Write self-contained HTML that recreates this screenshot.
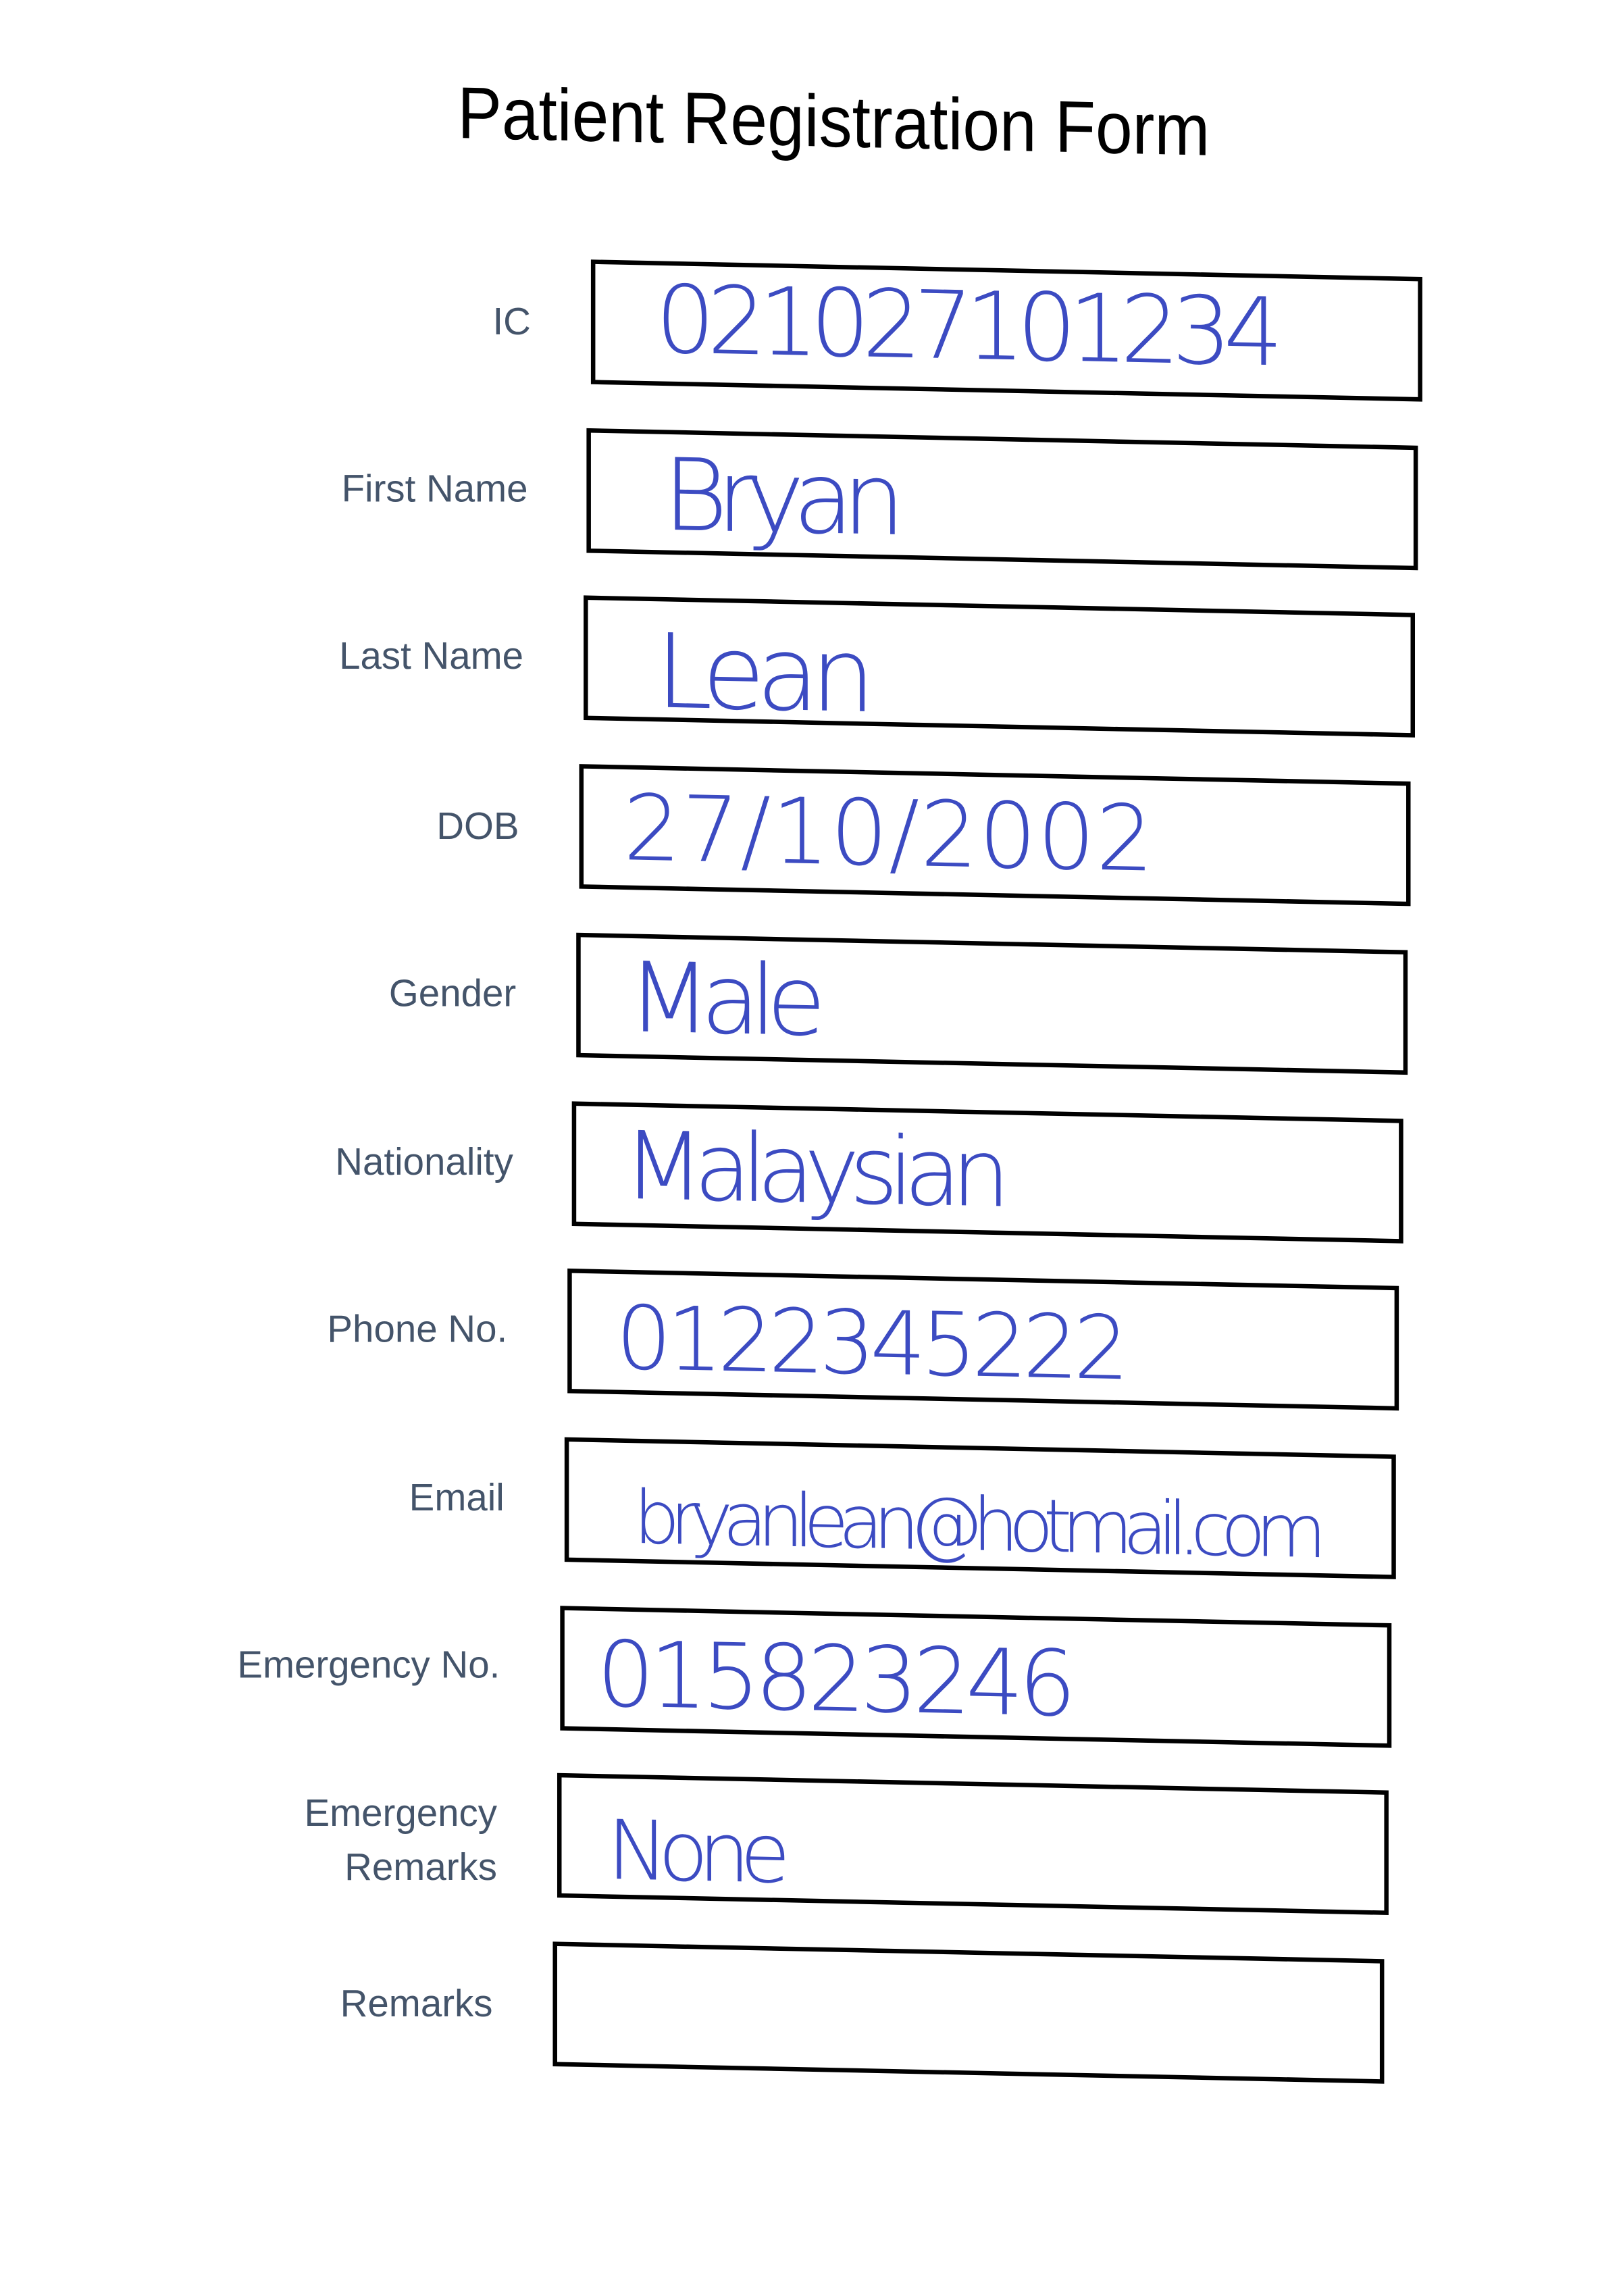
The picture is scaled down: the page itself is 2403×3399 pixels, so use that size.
<!DOCTYPE html>
<html><head><meta charset="utf-8"><style>
html,body{margin:0;padding:0;background:#fff;overflow:hidden}
#w{position:absolute;left:0;top:0;width:1100px;height:1556px;transform:scale(2.171);transform-origin:0 0}
.b{position:absolute;width:561px;height:79px;border:3.5px solid #000;transform:skewY(1.2deg);transform-origin:0 0}
.l{position:absolute;font-family:"Liberation Sans",sans-serif;font-size:26px;line-height:26px;color:#44546a;text-align:right;white-space:nowrap}
.h{position:absolute;font-family:"DejaVu Sans","Liberation Sans",sans-serif;font-weight:200;color:#3c4bc2;line-height:1;white-space:nowrap;transform:skewY(1.2deg);transform-origin:0 0}
</style></head><body><div id="w">
<div style="position:absolute;left:312px;top:52px;font-family:'Liberation Sans',sans-serif;font-size:50px;line-height:1;color:#000;white-space:nowrap;transform:scaleX(0.905) skewY(1.2deg);transform-origin:0 0">Patient Registration Form</div>

<div class="b" style="left:403px;top:177px"></div>
<div class="b" style="left:400px;top:292px"></div>
<div class="b" style="left:398px;top:406px"></div>
<div class="b" style="left:395px;top:521px"></div>
<div class="b" style="left:393px;top:636px"></div>
<div class="b" style="left:390px;top:751px"></div>
<div class="b" style="left:387px;top:865px"></div>
<div class="b" style="left:385px;top:980px"></div>
<div class="b" style="left:382px;top:1095px"></div>
<div class="b" style="left:380px;top:1209px"></div>
<div class="b" style="left:377px;top:1324px"></div>

<div class="l" style="right:738px;top:206px">IC</div>
<div class="l" style="right:740px;top:320px">First Name</div>
<div class="l" style="right:743px;top:434px">Last Name</div>
<div class="l" style="right:746px;top:550px">DOB</div>
<div class="l" style="right:748px;top:664px">Gender</div>
<div class="l" style="right:750px;top:779px">Nationality</div>
<div class="l" style="right:754px;top:893px">Phone No.</div>
<div class="l" style="right:756px;top:1008px">Email</div>
<div class="l" style="right:759px;top:1122px">Emergency No.</div>
<div class="l" style="right:761px;top:1218px;line-height:37px">Emergency<br>Remarks</div>
<div class="l" style="right:764px;top:1353px">Remarks</div>

<div class="h" style="left:447px;top:187px;font-size:64px;letter-spacing:-5.5px">021027101234</div>
<div class="h" style="left:452px;top:305px;font-size:68px;letter-spacing:-8px">Bryan</div>
<div class="h" style="left:447px;top:423px;font-size:70px;letter-spacing:-6px">Lean</div>
<div class="h" style="left:425px;top:534px;font-size:62px;letter-spacing:0.5px">27/10/2002</div>
<div class="h" style="left:428px;top:648px;font-size:66px;letter-spacing:-7px">Male</div>
<div class="h" style="left:425px;top:764px;font-size:64px;letter-spacing:-7px">Malaysian</div>
<div class="h" style="left:420px;top:883px;font-size:60px;letter-spacing:-3.5px">0122345222</div>
<div class="h" style="left:432px;top:1010px;font-size:50px;letter-spacing:-7px">bryanlean@hotmail.com</div>
<div class="h" style="left:407px;top:1111px;font-size:62px;letter-spacing:-3.5px">015823246</div>
<div class="h" style="left:414px;top:1235px;font-size:56px;letter-spacing:-7px">None</div>
</div></body></html>
